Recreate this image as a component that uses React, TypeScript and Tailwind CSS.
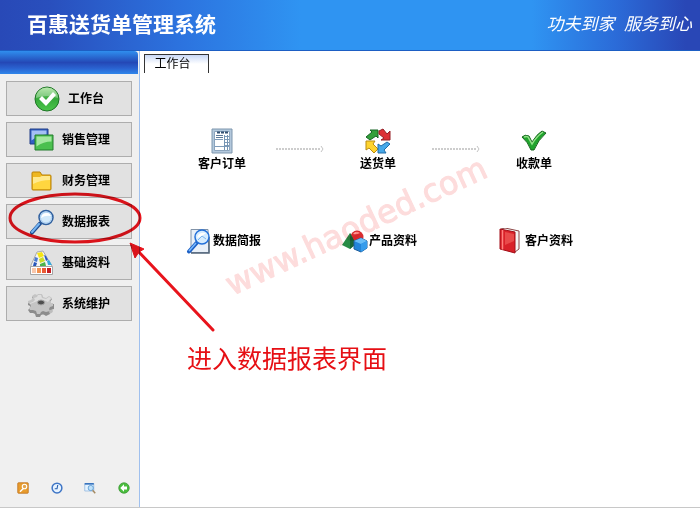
import React, { useState } from 'react';

type IconProps = { className?: string };

const CheckCircleIcon = ({ className }: IconProps) => (
    <svg viewBox="0 0 26 26" className={className} aria-hidden="true">
        <defs>
            <linearGradient id="ball" x1="0" y1="0" x2="0" y2="1">
                <stop offset="0" stopColor="#9be08b" />
                <stop offset="0.5" stopColor="#35a93a" />
                <stop offset="1" stopColor="#4cc74b" />
            </linearGradient>
        </defs>
        <circle cx="13" cy="13" r="12" fill="url(#ball)" stroke="#1f7527" />
        <path d="M2 12a11 10.500 0 0 1 22 0q-11-4-22 0z" fill="#fff" opacity="0.3" />
        <path d="M5 13l3-3 4 4 7-8 3 3L12 20z" fill="#fff" />
    </svg>
);

const WindowsIcon = ({ className }: IconProps) => (
    <svg viewBox="0 0 26 26" className={className} aria-hidden="true">
        <path d="M2 2h18v15H2z" fill="#315fc3" stroke="#223f86" />
        <path d="M3.500 3.500h15v4q-8 0-15 6z" fill="#a4c0f5" />
        <path d="M7 8h18v15H7z" fill="#4bc04f" stroke="#237c2d" />
        <path d="M8.500 9.500h15v5q-8 0-15 5z" fill="#a4e8a0" />
    </svg>
);

const FolderIcon = ({ className }: IconProps) => (
    <svg viewBox="0 0 26 26" className={className} aria-hidden="true">
        <path d="M4 21V5q0-1 1-1h7l2 3h8q1 0 1 1v13q0 1-1 1H5q-1 0-1-1z" fill="#eeb720" stroke="#b98207" />
        <path d="M5 9h7l2-1h8v13H5z" fill="#ffd63f" />
        <path d="M5 9h7l2-1h8v4q-9 0-17 4z" fill="#ffe98d" />
    </svg>
);

const MagnifierIcon = ({ className }: IconProps) => (
    <svg viewBox="0 0 26 26" className={className} aria-hidden="true">
        <path d="M4 23.500l8-9" stroke="#1e4e93" strokeWidth="4" strokeLinecap="round" />
        <path d="M4 23l7-8" stroke="#75b5f2" strokeWidth="2" strokeLinecap="round" />
        <circle cx="18" cy="8.500" r="7" fill="#d3eafb" stroke="#30609f" strokeWidth="1.500" />
        <circle cx="18" cy="8.500" r="5.500" fill="none" stroke="#a8cdf2" />
        <path d="M13 9q1-5 6-5 3 0 4 3-6-1-10 2z" fill="#fff" />
    </svg>
);

const SwatchIcon = ({ className }: IconProps) => (
    <svg viewBox="0 0 26 26" className={className} aria-hidden="true">
        <path d="M9 2l6-1 9 15v8H3V15z" fill="#f4f4f4" stroke="#aaa" />
        <path d="M7 7l3 1-1 4-3-1z" fill="#4a78cf" />
        <path d="M6 12l3 1-1 3H5z" fill="#2755b8" />
        <path d="M9 3l5-1 2 4-5 2z" fill="#f5e414" />
        <path d="M11 9l4-2 2 4-5 2z" fill="#c8dc28" />
        <path d="M12 14l5-2 1 4h-6z" fill="#4bb34b" />
        <path d="M16 5l2 1 2 4-2 1z" fill="#2754c6" />
        <path d="M19 11l2-1 3 5h-4z" fill="#37aadd" />
        <path d="M2.500 16.500h22v8h-22z" fill="#fff" stroke="#a5a5a5" />
        <path d="M4 18h4v5H4z" fill="#f9c7ab" />
        <path d="M9 18h4v5H9z" fill="#f2904e" />
        <path d="M14 18h4v5h-4z" fill="#ea5a34" />
        <path d="M19 18h4v5h-4z" fill="#c51e22" />
    </svg>
);

const GearIcon = ({ className }: IconProps) => (
    <svg viewBox="0 0 26 26" className={className} aria-hidden="true">
        <ellipse cx="15" cy="20" rx="10" ry="4" fill="#bdbdbd" />
        <path
            d="M10 4h4l1 3 3 1 3-2 3 2-2 3 1 2h3v5l-4 1-1 2 1 2-4 2-3-2-2 1-1 2H8l-1-3-2-1-3 0-2-3 2-2 0-2-2-1v-4l3 0 2-2-1-2 3-2 3 1z"
            fill="#8c8c8c"
        />
        <path
            d="M10 3h4l1 3 3 1 3-2 3 2-2 3 1 2h2v3l-3 1-1 2 1 2-4 1-3-1-2 1-1 2H9l-1-3-3-1-3 0-1-2 2-2-1-2-2-1v-2l3-1 2-2-1-2 3-2 2 1z"
            fill="#c4c4c4"
        />
        <path d="M10 4h3l1 3 4 1 3-2 2 1-3 4q-6-4-13 0l-5 2v-1l3-1 2-2-1-2 3-1z" fill="#dedede" />
        <ellipse cx="13" cy="11.500" rx="3.500" ry="2.500" fill="#4f4f4f" stroke="#aaa" />
    </svg>
);

const OrderIcon = ({ className }: IconProps) => (
    <svg viewBox="0 0 26 26" className={className} aria-hidden="true">
        <path d="M3 1h20v24H3z" fill="#b3c8dc" stroke="#7f97ae" />
        <path d="M5.500 3.500h15v19h-15z" fill="#fff" stroke="#8ba4bd" />
        <path d="M8 4.500h12" stroke="#345172" strokeWidth="2" strokeDasharray="3 1" />
        <path d="M7 7.500h7M7 9.500h7" stroke="#5d7a99" />
        <path d="M6 11.500h8M16 8.500h4M16 11.500h4M16 14.500h4M16 17.500h4M6 18.500h14" stroke="#7f9cba" />
        <path d="M15.500 7v15M18.500 7v15" stroke="#7595b3" />
    </svg>
);

const CycleIcon = ({ className }: IconProps) => (
    <svg viewBox="0 0 26 26" className={className} aria-hidden="true">
        <path d="M1 9l6-5-2-2h8v8l-2-2-6 4z" fill="#33a03a" stroke="#176525" />
        <path d="M14 3l4-2 4 5 3-3v9h-9l3-2-5-4z" fill="#dc3035" stroke="#951f25" />
        <path d="M1 13h9l-2 3 5 5-4 4-5-5-3 2z" fill="#ffd42e" stroke="#b88b14" />
        <path d="M25 16l-6 6 2 3h-8v-9l3 2 6-4z" fill="#46a8e9" stroke="#226ca7" />
    </svg>
);

const TickIcon = ({ className }: IconProps) => (
    <svg viewBox="0 0 26 26" className={className} aria-hidden="true">
        <path d="M1 9q3-3 7-1l3 6q5-8 10-11l4 2Q17 12 13 22h-3Q7 14 1 9z" fill="#20a42d" stroke="#17651e" />
        <path d="M3 9q3-1 4 0l4 7Q16 8 22 4" fill="none" stroke="#93e188" strokeWidth="1.500" />
    </svg>
);

const ReportIcon = ({ className }: IconProps) => (
    <svg viewBox="0 0 26 26" className={className} aria-hidden="true">
        <path d="M5 1.500h17l1 23H5z" fill="#e9f0f8" stroke="#8193a8" />
        <path d="M5 25h18V9" fill="none" stroke="#536579" strokeWidth="1.500" />
        <path d="M3 23.500l8-9" stroke="#1c5fc4" strokeWidth="4" strokeLinecap="round" />
        <path d="M3 23l7-8" stroke="#79baff" strokeWidth="1.500" />
        <circle cx="16" cy="9" r="7" fill="#d6ecfe" stroke="#2471d9" strokeWidth="1.500" />
        <path d="M11 10q1-6 9-5l-4 3z" fill="#fff" />
        <path d="M12 12l4-4 4 3" fill="none" stroke="#7ab5ee" />
    </svg>
);

const ShapesIcon = ({ className }: IconProps) => (
    <svg viewBox="0 0 26 26" className={className} aria-hidden="true">
        <circle cx="15" cy="9" r="6.500" fill="#d92c30" />
        <path d="M11 6q3-4 7-1-3 2-7 1z" fill="#ff9b97" />
        <path d="M8 5L0 17l8 4 6-5z" fill="#298b45" />
        <path d="M8 5v16l6-5z" fill="#1a6638" />
        <path d="M12 13l7-3 6 3v7l-6 4-7-3z" fill="#2384d9" stroke="#205e9b" />
        <path d="M12 13l7-3 6 3-6 3z" fill="#69bdf7" />
        <path d="M19 16l6-3v7l-6 4z" fill="#369cec" />
    </svg>
);

const BookIcon = ({ className }: IconProps) => (
    <svg viewBox="0 0 26 26" className={className} aria-hidden="true">
        <path d="M3 1l4-1 14 3v18l-4 3z" fill="#f4f4f4" stroke="#8b4545" />
        <path d="M2 1l15 3v21L2 21z" fill="#d92129" stroke="#a20f18" />
        <path d="M4.500 2v19.500" stroke="#ff817e" strokeWidth="1.500" />
        <path d="M7 4l9 2v7l-9 4z" fill="#ef5c59" opacity="0.700" />
    </svg>
);

const KeyIcon = ({ className }: IconProps) => (
    <svg viewBox="0 0 16 16" className={className} aria-hidden="true">
        <rect x="1" y="1" width="14" height="14" rx="1" fill="#e89c2d" stroke="#bb6b16" />
        <path d="M4 13l5-5" stroke="#fff" strokeWidth="2" />
        <circle cx="10" cy="6" r="3" fill="#e4a44a" stroke="#fff" strokeWidth="1.500" />
    </svg>
);

const ClockIcon = ({ className }: IconProps) => (
    <svg viewBox="0 0 16 16" className={className} aria-hidden="true">
        <circle cx="8" cy="8" r="6.500" fill="#e7f3ff" stroke="#3f76c6" strokeWidth="2" />
        <path d="M9 4L8 9H5" fill="none" stroke="#285fae" strokeWidth="1.500" />
    </svg>
);

const PreviewIcon = ({ className }: IconProps) => (
    <svg viewBox="0 0 16 16" className={className} aria-hidden="true">
        <path d="M1 2h12v10H1z" fill="#e4f3ff" stroke="#8eb4dd" />
        <path d="M1 2.500h12" stroke="#2a68b8" strokeWidth="2" />
        <circle cx="9" cy="8" r="3.500" fill="#bfe2fb" stroke="#4f91cd" />
        <path d="M11.500 11l3.500 4" stroke="#a68a61" strokeWidth="2" />
    </svg>
);

const BackIcon = ({ className }: IconProps) => (
    <svg viewBox="0 0 16 16" className={className} aria-hidden="true">
        <circle cx="8" cy="8" r="7" fill="#49bd3d" stroke="#3b9634" />
        <path d="M8 3L3 8l5 5v-3h4V6H8z" fill="#fff" />
    </svg>
);

const DottedArrow = () => (
    <svg viewBox="0 0 50 8" className="mt-[17px] h-2 w-[50px] justify-self-center" aria-hidden="true">
        <path d="M1 4h45" stroke="#bdbdbd" strokeWidth="1.500" strokeDasharray="2 1" />
        <path d="M46 1l2 3-2 3" fill="none" stroke="#c3c3c3" />
    </svg>
);

const menu = [
    { icon: CheckCircleIcon, label: '工作台' },
    { icon: WindowsIcon, label: '销售管理' },
    { icon: FolderIcon, label: '财务管理' },
    { icon: MagnifierIcon, label: '数据报表' },
    { icon: SwatchIcon, label: '基础资料' },
    { icon: GearIcon, label: '系统维护' }
];

const tools = [
    { icon: KeyIcon, title: '密码' },
    { icon: ClockIcon, title: '时间' },
    { icon: PreviewIcon, title: '预览' },
    { icon: BackIcon, title: '返回' }
];

const steps = [
    { icon: OrderIcon, label: '客户订单' },
    { icon: CycleIcon, label: '送货单' },
    { icon: TickIcon, label: '收款单' }
];

const links = [
    { icon: ReportIcon, label: '数据简报' },
    { icon: ShapesIcon, label: '产品资料' },
    { icon: BookIcon, label: '客户资料' }
];

export default function App() {
    const [, setActive] = useState('工作台');

    return (
        <div className="relative flex min-h-screen flex-col overflow-hidden border-b border-[#c8c8c8] bg-white font-['Liberation_Sans','Noto_Sans_CJK_SC',sans-serif] text-xs text-black">

            {/* Header */}
            <header className="flex h-[51px] items-center justify-between border-b border-[#1d5fc4] bg-[linear-gradient(90deg,#2849b7_0%,#294fbd_7%,#2c73df_26%,#2f94f2_43%,#2f94f2_76%,#2b6bd8_88%,#2947b6_98%)] pr-2 pl-[27px] text-white">
                <h1 className="text-[21px] leading-6 font-bold">百惠送货单管理系统</h1>
                <p className="text-[17px] leading-6 italic">功夫到家&nbsp; 服务到心</p>
            </header>

            <div className="flex flex-1">

                {/* Sidebar */}
                <aside className="flex w-[140px] shrink-0 flex-col border-r border-[#9fc0ee] bg-[#f0f0f0]">
                    <div className="mr-px h-[23px] rounded-tr bg-[linear-gradient(180deg,#2f8eee_0%,#2448b6_50%,#2a62d0_75%,#2f86ea_100%)]"></div>
                    <nav className="mt-[7px] flex flex-col gap-[6px] pr-[7px] pl-[6px]">
                        {menu.map((item) => (
                            <button
                                key={item.label}
                                type="button"
                                onClick={() => setActive(item.label)}
                                className="flex h-[35px] items-center justify-center gap-2 border border-[#adadad] bg-[#e1e1e1] font-bold"
                            >
                                <item.icon className="h-[26px] w-[26px]" />
                                {item.label}
                            </button>
                        ))}
                    </nav>
                    <div className="mt-auto mb-[13px] flex justify-between pr-[9px] pl-[17px]">
                        {tools.map((tool) => (
                            <button key={tool.title} type="button" aria-label={tool.title}>
                                <tool.icon className="h-3 w-3" />
                            </button>
                        ))}
                    </div>
                </aside>

                {/* Workspace */}
                <main className="flex-1">
                    <div role="tablist" className="flex pt-[3px] pl-1">
                        <button
                            type="button"
                            role="tab"
                            aria-selected="true"
                            className="h-[19px] w-[65px] border border-b-0 border-[#333] bg-linear-to-b from-[#c8d8f6] to-white to-50% pr-2 text-xs leading-[18px]"
                        >
                            工作台
                        </button>
                    </div>

                    <div className="mt-[55px] grid grid-cols-5 items-start pr-[127px] pl-[43px]">
                        {steps.map((step, idx) => (
                            <React.Fragment key={step.label}>
                                {idx > 0 && <DottedArrow />}
                                <button type="button" className="flex flex-col items-center gap-[2px] leading-4 font-bold">
                                    <step.icon className="h-[26px] w-[26px]" />
                                    {step.label}
                                </button>
                            </React.Fragment>
                        ))}
                    </div>

                    <div className="mt-14 grid grid-cols-3 pr-[46px] pl-[46px]">
                        {links.map((link) => (
                            <button key={link.label} type="button" className="flex items-center gap-[1px] font-bold">
                                <link.icon className="h-[26px] w-[26px]" />
                                {link.label}
                            </button>
                        ))}
                    </div>

                    <p className="mt-[89px] pl-[47px] text-[25px] leading-8 text-[#e60f14]">进入数据报表界面</p>
                </main>
            </div>

            {/* Watermark and pointer drawn over the window */}
            <div className="pointer-events-none absolute top-0 left-0 mix-blend-multiply">
                <svg viewBox="0 0 700 508" className="h-[508px] w-[700px]" aria-hidden="true">
                    <text
                        x="232"
                        y="296"
                        transform="rotate(-25 232 296)"
                        strokeWidth="1"
                        strokeLinejoin="round"
                        className="fill-[#fddcdc] stroke-[#fddcdc] font-['DejaVu_Sans',sans-serif] text-[32px]"
                    >
                        www.haoded.com
                    </text>
                    <ellipse cx="75" cy="218" rx="65" ry="24" fill="none" stroke="#e8141c" strokeWidth="3" />
                    <path d="M213 330L137 250" stroke="#e8141c" strokeWidth="3" strokeLinecap="round" />
                    <path d="M130 243l14 6-5 3-4 6z" fill="#e8141c" stroke="#e8141c" />
                </svg>
            </div>
        </div>
    );
}
